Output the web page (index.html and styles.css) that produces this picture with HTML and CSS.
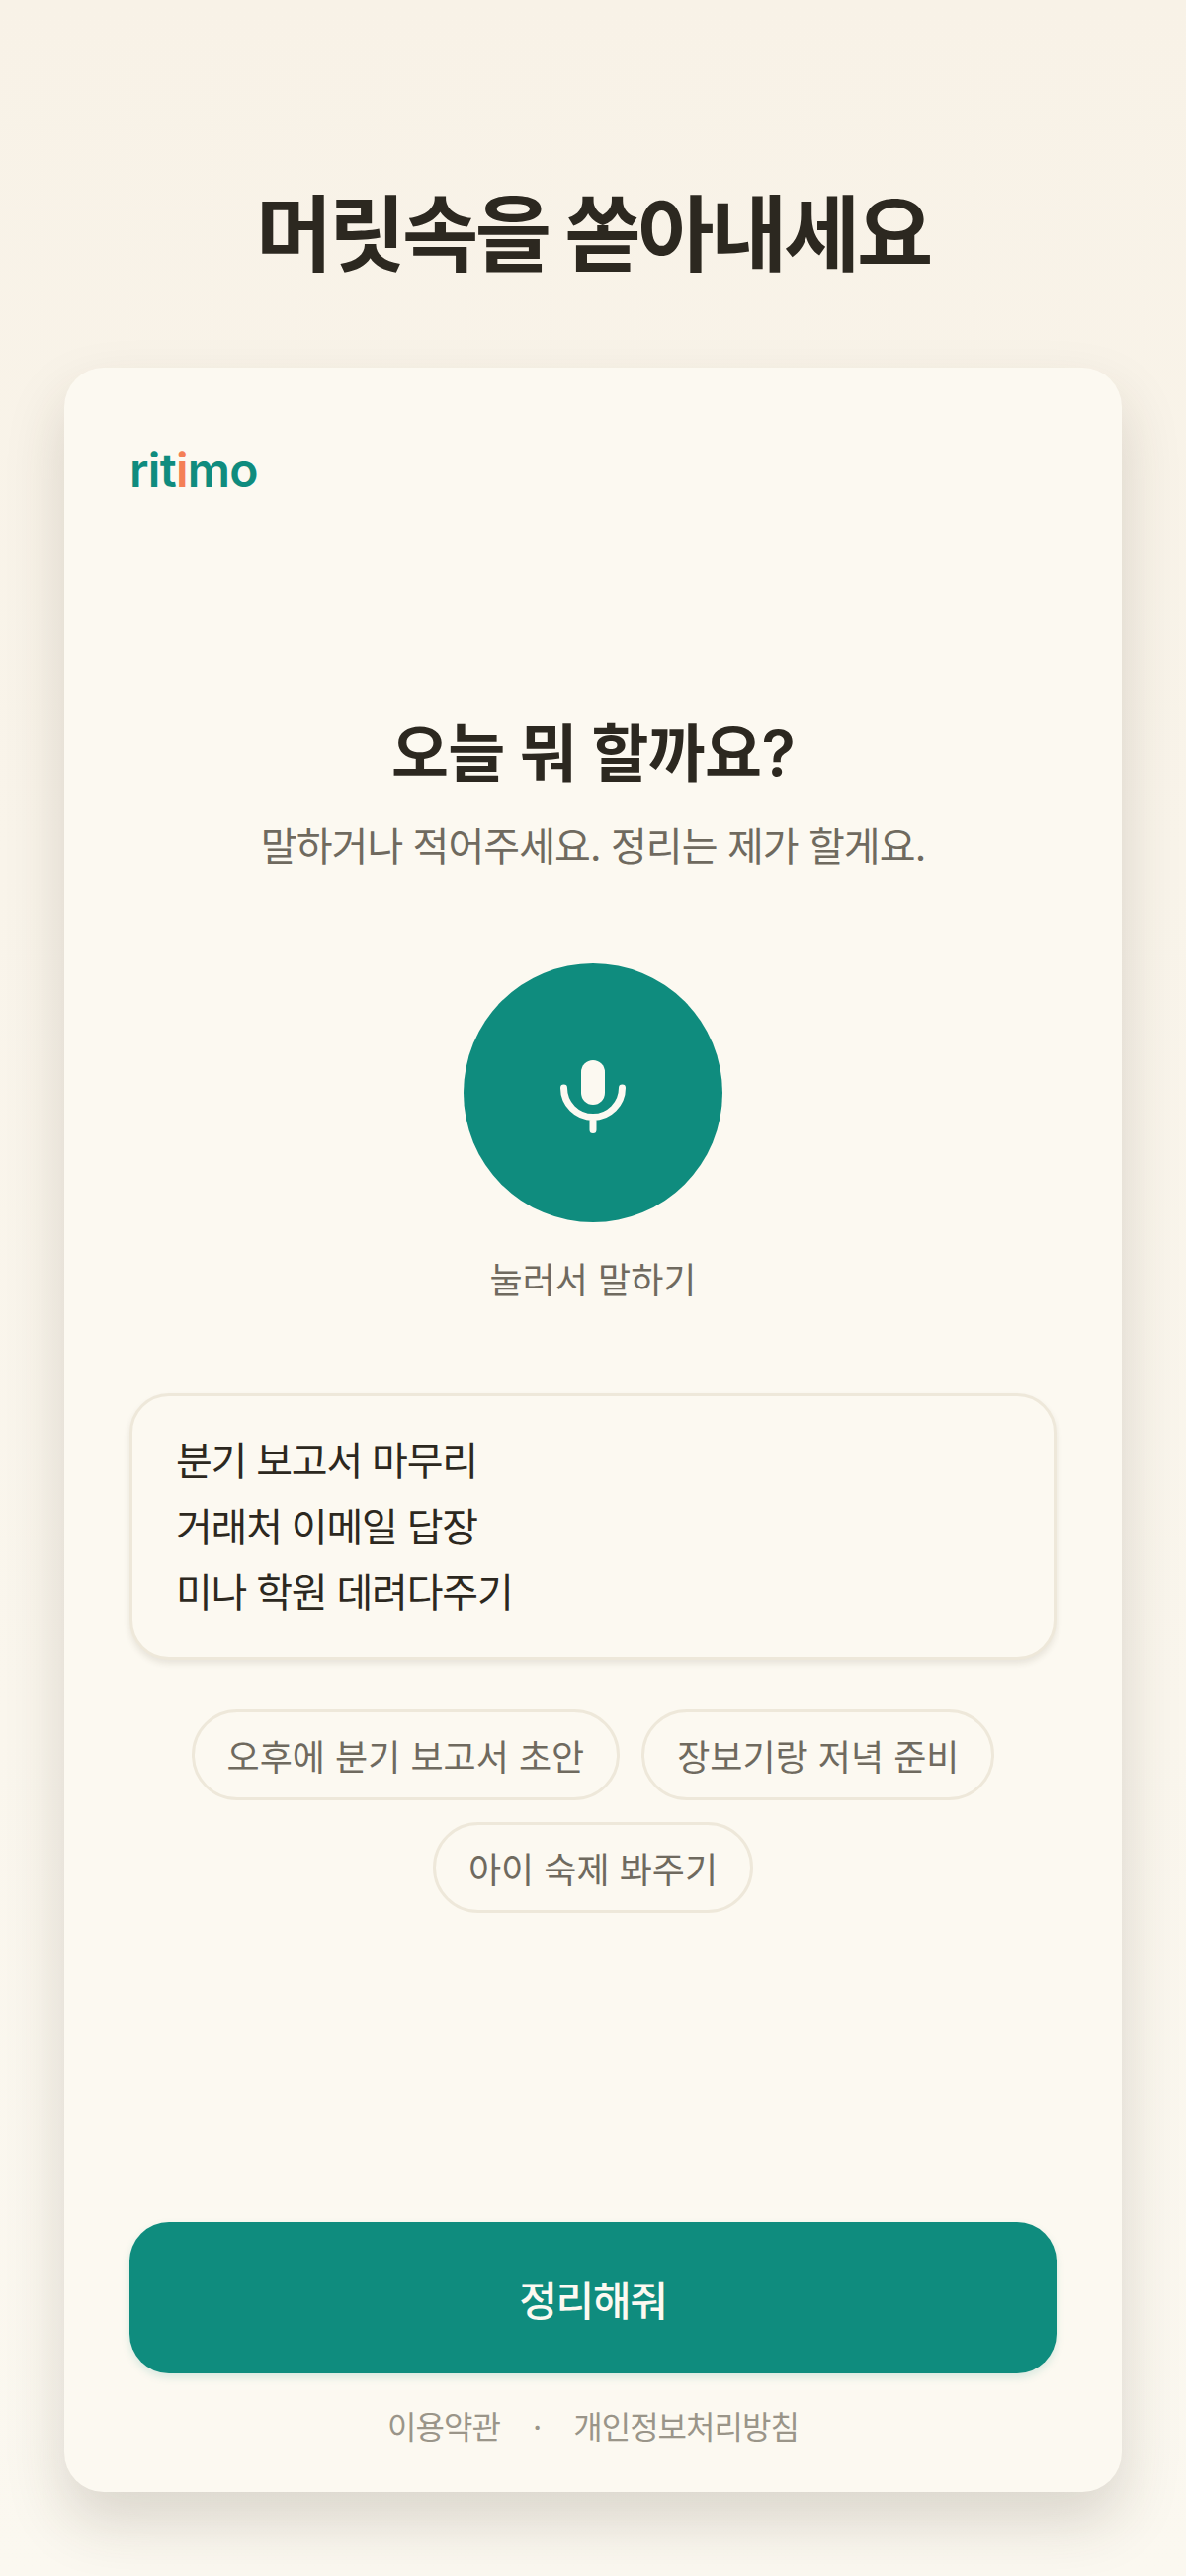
FILE: index.html
```html
<!DOCTYPE html>
<html lang="ko">
<head>
<meta charset="utf-8">
<title>ritimo</title>
<link rel="stylesheet" href="styles.css">
</head>
<body>
<main class="page">
  <h1 class="headline">머릿속을 쏟아내세요</h1>
  <section class="card">
    <div class="logo">rit<span class="logo-accent">i</span>mo</div>
    <div class="intro">
      <h2 class="intro-title">오늘 뭐 할까요?</h2>
      <p class="intro-sub">말하거나 적어주세요. 정리는 제가 할게요.</p>
    </div>
    <div class="voice">
      <button class="mic" type="button" aria-label="눌러서 말하기">
        <svg class="mic-icon" viewBox="0 -8 66 82" width="66" height="82">
          <rect class="mic-body" x="21" y="0" width="24" height="45" rx="12"/>
          <path class="mic-arc" d="M3.500 28a29.500 29.500 0 0 0 59 0M33 58v12.500"/>
        </svg>
      </button>
      <div class="mic-label">눌러서 말하기</div>
    </div>
    <div class="note">
      <div>분기 보고서 마무리</div>
      <div>거래처 이메일 답장</div>
      <div>미나 학원 데려다주기</div>
    </div>
    <div class="chips">
      <span class="chip">오후에 분기 보고서 초안</span>
      <span class="chip">장보기랑 저녁 준비</span>
      <span class="chip">아이 숙제 봐주기</span>
    </div>
    <div class="spacer"></div>
    <button class="submit" type="button">정리해줘</button>
    <footer class="legal">
      <span>이용약관</span>
      <span class="legal-dot">·</span>
      <span>개인정보처리방침</span>
    </footer>
  </section>
</main>
</body>
</html>
```
FILE: styles.css
```css
* { box-sizing: border-box; }
html, body { margin: 0; padding: 0; }
body {
  background: linear-gradient(180deg, #f8f2e7 0%, #fbf8f0 100%);
  font-family: Inter, "Noto Sans CJK KR", sans-serif;
  color: #2c2820;
}
.page {
  height: 2607px;
  padding: 180px 65px 0;
  display: flex;
  flex-direction: column;
}
.headline {
  margin: 0;
  height: 192px;
  font-size: 84px;
  line-height: 116px;
  font-weight: 700;
  letter-spacing: -0.04em;
  text-align: center;
  color: #2c2820;
}
.card {
  height: 2150px;
  background: #fcf9f1;
  border-radius: 40px;
  padding: 72px 66px 41px;
  display: flex;
  flex-direction: column;
  box-shadow: 0 30px 60px rgba(60, 50, 30, 0.17);
}
.logo {
  font-size: 48px;
  line-height: 64px;
  font-weight: 600;
  letter-spacing: -0.015em;
  color: #0f8c7e;
}
.logo-accent { color: #f47f56; }
.intro { margin-top: 210px; text-align: center; }
.intro-title {
  margin: 0;
  font-size: 63px;
  line-height: 88px;
  font-weight: 600;
  letter-spacing: -0.01em;
  color: #2c2820;
}
.intro-sub {
  margin: 21px 0 0;
  font-size: 40px;
  line-height: 60px;
  letter-spacing: -0.023em;
  color: #6f6a5f;
}
.voice {
  margin-top: 88px;
  display: flex;
  flex-direction: column;
  align-items: center;
}
.mic {
  width: 262px;
  height: 262px;
  border: 0;
  padding: 0;
  border-radius: 50%;
  background: #0f8c7e;
  display: flex;
  align-items: center;
  justify-content: center;
}
.mic-body { fill: #fcf9f1; }
.mic-arc {
  fill: none;
  stroke: #fcf9f1;
  stroke-width: 7;
  stroke-linecap: round;
}
.mic-label {
  margin-top: 32px;
  font-size: 36px;
  line-height: 54px;
  color: #6f6a5f;
}
.note {
  margin-top: 87px;
  height: 270px;
  padding: 33px 44px;
  border: 3px solid #eee8da;
  border-radius: 40px;
  background: #fcf9f1;
  font-size: 40px;
  line-height: 66.500px;
  letter-spacing: -0.03em;
  color: #2c2820;
  box-shadow: 0 4px 6px rgba(60, 50, 30, 0.1);
}
.chips {
  margin-top: 50px;
  display: flex;
  flex-wrap: wrap;
  justify-content: center;
  gap: 22px;
}
.chip {
  height: 92px;
  padding: 0 33px;
  display: flex;
  align-items: center;
  border: 3px solid #eee8da;
  border-radius: 46px;
  font-size: 36px;
  color: #6f6a5f;
}
.spacer { flex: 1; }
.submit {
  height: 153px;
  border: 0;
  border-radius: 40px;
  background: #0f8c7e;
  font-family: inherit;
  font-size: 42px;
  font-weight: 500;
  letter-spacing: -0.03em;
  color: #fcf9f1;
  box-shadow: 0 4px 8px rgba(15, 140, 126, 0.15);
}
.legal {
  margin-top: 31px;
  display: flex;
  justify-content: center;
  gap: 33px;
  font-size: 32px;
  line-height: 48px;
  letter-spacing: -0.03em;
  color: #9a9589;
}
```
